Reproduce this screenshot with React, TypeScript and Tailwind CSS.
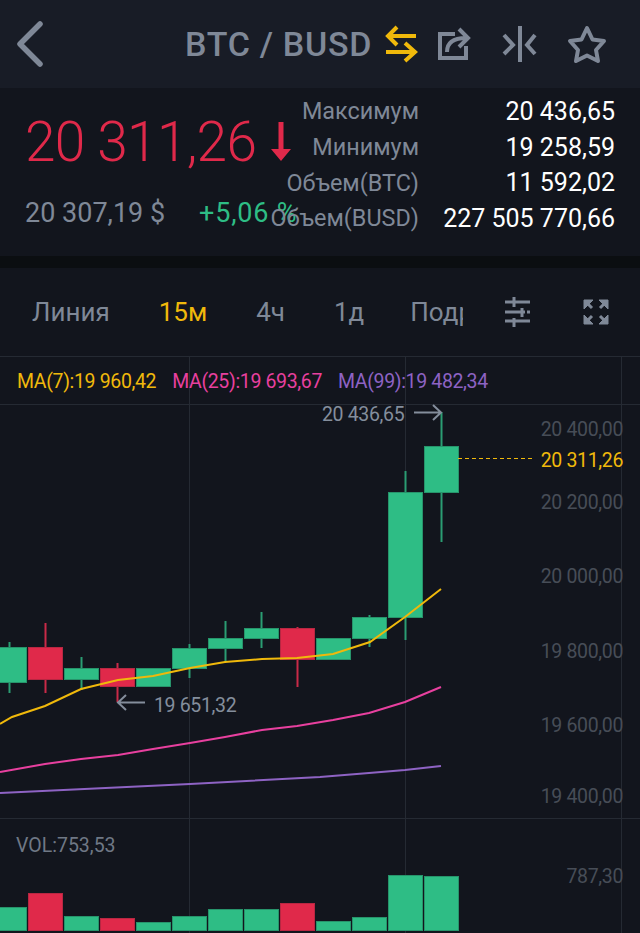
import React from 'react';

type Candle = { cx: number; top: number; bottom: number; wickTop: number; wickBottom: number; up: boolean };

const candles: Candle[] = [
  { cx: 9, top: 647, bottom: 682, wickTop: 642, wickBottom: 693, up: true },
  { cx: 45, top: 647, bottom: 679, wickTop: 623, wickBottom: 693, up: false },
  { cx: 81, top: 668, bottom: 679, wickTop: 657, wickBottom: 690, up: true },
  { cx: 117, top: 668, bottom: 686, wickTop: 663, wickBottom: 702, up: false },
  { cx: 153, top: 668, bottom: 686, wickTop: 668, wickBottom: 686, up: true },
  { cx: 189, top: 648, bottom: 668, wickTop: 644, wickBottom: 678, up: true },
  { cx: 225, top: 638, bottom: 648, wickTop: 621, wickBottom: 662, up: true },
  { cx: 261, top: 628, bottom: 638, wickTop: 612, wickBottom: 648, up: true },
  { cx: 297, top: 628, bottom: 659, wickTop: 627, wickBottom: 687, up: false },
  { cx: 333, top: 638, bottom: 659, wickTop: 638, wickBottom: 659, up: true },
  { cx: 369, top: 617, bottom: 638, wickTop: 615, wickBottom: 647, up: true },
  { cx: 405, top: 492, bottom: 617, wickTop: 471, wickBottom: 640, up: true },
  { cx: 441, top: 446, bottom: 492, wickTop: 412, wickBottom: 542, up: true },
];

const volumes = [907, 893, 916, 918, 922, 916, 909, 909, 903, 921, 917, 875, 876];

const ma7 = '0,724 12,717 45,706 81,689 118,680 153,676 190,668 225,662 262,659 297,658 333,654 370,642 405,617 441,589';
const ma25 = '0,772 45,764 81,759 118,755 153,749 190,743 225,737 262,730 297,726 333,720 369,713 405,702 441,687';
const ma99 = '0,793 190,784 320,777 369,773 405,770 441,766';

const stats = [
  { label: 'Максимум', value: '20 436,65' },
  { label: 'Минимум', value: '19 258,59' },
  { label: 'Объем(BTC)', value: '11 592,02' },
  { label: 'Объем(BUSD)', value: '227 505 770,66' },
];

const Header = () => (
  <div className="flex h-[88px] items-center bg-[#181c26] text-[#7f8897]">
    <svg viewBox="14 18 32 52" className="ml-[14px] h-[52px] w-[32px]" fill="none" stroke="currentColor" strokeWidth="5.5" strokeLinecap="round" strokeLinejoin="round">
      <path d="M40 24 L20 44 L40 64" />
    </svg>
    <div className="ml-[139px] w-[199px] whitespace-nowrap text-[34px] font-medium leading-none tracking-[0.7px]">BTC / BUSD</div>
    <svg viewBox="384 24 36 40" className="h-[40px] w-[36px]" fill="none" stroke="#f0b90b" strokeWidth="4">
      <path d="M416 36 H388 M397 27 L388 36 L397 45 M386 52 H415 M405 43 L415 52 L405 61" />
    </svg>
    <svg viewBox="436 26 36 36" className="ml-[16px] h-[36px] w-[36px]" fill="none" stroke="currentColor" strokeWidth="4">
      <path d="M455 34 H440 V58 H466 V46" />
      <path d="M447 52 C447 44 452 38 466 38 M459 29 L468 38 L459 47" />
    </svg>
    <svg viewBox="502 24 36 40" className="ml-[30px] h-[40px] w-[36px]" fill="none" stroke="currentColor" strokeWidth="4">
      <path d="M520 26 V62" />
      <path d="M504 35 L513 45 L504 54 M535 35 L527 45 L535 54" />
    </svg>
    <svg viewBox="566 24 42 40" className="ml-[28px] h-[40px] w-[42px]" fill="none" stroke="currentColor" strokeWidth="4" strokeLinejoin="round">
      <path d="M587 28 L592.5 39.5 L604 41 L596 50 L598 61 L587 55.5 L576 61 L578 50 L570 41 L581.5 39.5 Z" />
    </svg>
  </div>
);

const Stats = () => (
  <div className="flex h-[168px] bg-[#12151d]">
    <div className="w-[268px] shrink-0 pl-[25px] pt-[24px]">
      <div className="flex w-max items-center whitespace-nowrap text-[#e0294a]">
        <span className="text-[55px] font-light leading-[60px] tracking-[-0.7px]">20 311,26</span>
        <svg viewBox="0 0 22 40" className="ml-[14px] h-[40px] w-[22px] shrink-0" fill="currentColor">
          <path d="M8.5 0 H13.5 V27 H21 L11 39 L1 27 H8.5 Z" />
        </svg>
      </div>
      <div className="mt-[26px] flex w-max items-center whitespace-nowrap text-[27px] leading-[30px]">
        <span className="text-[#7f8897]">20 307,19 $</span>
        <span className="ml-[34px] tracking-[0.8px] text-[#2ebd85]">+5,06 %</span>
      </div>
    </div>
    <div className="flex grow flex-col pr-[25px] pt-[6px]">
      {stats.map((row) => (
        <div key={row.label} className="flex h-[35.7px] items-center justify-between whitespace-nowrap text-[23.4px]">
          <span className="w-[151px] text-right text-[#7f8897]">{row.label}</span>
          <span className="text-[25px] text-white">{row.value}</span>
        </div>
      ))}
    </div>
  </div>
);

const Toolbar = () => (
  <div className="flex h-[88px] items-center bg-[#12151d] text-[26px] text-[#7f8897]">
    <div className="ml-[32px] flex w-[431px] gap-[49px] overflow-hidden whitespace-nowrap">
      <span>Линия</span>
      <span className="text-[#f0b90b]">15м</span>
      <span>4ч</span>
      <span>1д</span>
      <span className="-ml-[3px]">Подробнее</span>
    </div>
    <svg viewBox="503 295 30 34" className="ml-[40px] h-[34px] w-[30px]" fill="none" stroke="currentColor" strokeWidth="3">
      <path d="M505 302 H530 M514 297 V307 M505 312 H525 M522 308 V317 M527 312 H530 M505 321 H530 M514 318 V327" />
    </svg>
    <svg viewBox="582 298 28 28" className="ml-[49px] h-[28px] w-[28px]" fill="currentColor" stroke="currentColor" strokeWidth="1">
      <path d="M584 300 H593 L584 309 Z M608 300 H599 L608 309 Z M584 324 H593 L584 315 Z M608 324 H599 L608 315 Z" />
      <path d="M586 302 L592 308 M606 302 L600 308 M586 322 L592 316 M606 322 L600 316" strokeWidth="3" />
    </svg>
  </div>
);

const axisLabels = [
  { text: '20 400,00', cls: 'top-[62px] text-[#474d57]' },
  { text: '20 311,26', cls: 'top-[93px] text-[#f0b90b]' },
  { text: '20 200,00', cls: 'top-[135px] text-[#474d57]' },
  { text: '20 000,00', cls: 'top-[209px] text-[#474d57]' },
  { text: '19 800,00', cls: 'top-[284px] text-[#474d57]' },
  { text: '19 600,00', cls: 'top-[358px] text-[#474d57]' },
  { text: '19 400,00', cls: 'top-[429px] text-[#474d57]' },
  { text: '787,30', cls: 'top-[509px] text-[#474d57]' },
];

const ChartArea = () => (
  <div className="relative h-[577px] overflow-hidden bg-[#12151d]">
    <svg viewBox="0 356 640 577" className="absolute inset-0 h-[577px] w-[640px]" fill="none">
      <path d="M0 356.5 H640 M0 404.5 H640 M0 818.5 H640 M189.5 356 V933 M405.5 356 V933 M621.5 356 V933" stroke="#252a33" strokeWidth="1" />
      {candles.map((c) => (
        <g key={c.cx}>
          <line x1={c.cx + 0.5} x2={c.cx + 0.5} y1={c.wickTop} y2={c.wickBottom} stroke={c.up ? '#2a9d73' : '#c92a48'} strokeWidth="2" />
          <rect x={c.cx - 16.5} y={c.top + 0.5} width={34} height={c.bottom - c.top} fill={c.up ? '#2ebd85' : '#e0294a'} stroke={c.up ? '#27946b' : '#b82742'} strokeWidth="1" />
        </g>
      ))}
      <polyline points={ma7} stroke="#f0b90b" strokeWidth="2" />
      <polyline points={ma25} stroke="#e8409f" strokeWidth="2" />
      <polyline points={ma99} stroke="#8e63c4" strokeWidth="2" />
      <line x1="458" x2="532" y1="458.5" y2="458.5" stroke="#f0b90b" strokeWidth="1" strokeDasharray="4 3" />
      <path d="M414 412.5 H441 M433 405 L441 412.5 L433 420" stroke="#848e9c" strokeWidth="2" />
      <path d="M145 702.5 H118 M126 695 L118 702.5 L126 710" stroke="#848e9c" strokeWidth="2" />
      {volumes.map((top, i) => (
        <rect key={i} x={candles[i].cx - 16.5} y={top + 0.5} width={34} height={930 - top} fill={candles[i].up ? '#2ebd85' : '#e0294a'} stroke={candles[i].up ? '#27946b' : '#b82742'} strokeWidth="1" />
      ))}
    </svg>
    <div className="relative flex h-[52px] items-center gap-[16px] whitespace-nowrap pl-[17px] text-[19.5px] tracking-[-0.35px]">
      <span className="text-[#f0b90b]">MA(7):19 960,42</span>
      <span className="text-[#e8409f]">MA(25):19 693,67</span>
      <span className="text-[#8e63c4]">MA(99):19 482,34</span>
    </div>
    {axisLabels.map((label) => (
      <span key={label.text} className={`absolute right-[17px] whitespace-nowrap text-[19.5px] leading-[24px] tracking-[-0.35px] ${label.cls}`}>
        {label.text}
      </span>
    ))}
    <span className="absolute left-[322px] top-[47px] whitespace-nowrap text-[19.5px] leading-[24px] tracking-[-0.35px] text-[#848e9c]">20 436,65</span>
    <span className="absolute left-[154px] top-[338px] whitespace-nowrap text-[19.5px] leading-[24px] tracking-[-0.35px] text-[#848e9c]">19 651,32</span>
    <span className="absolute left-[16px] top-[478px] whitespace-nowrap text-[19.5px] leading-[24px] text-[#6f7885]">VOL:753,53</span>
  </div>
);

export default function App() {
  return (
    <div className="h-[933px] w-[640px] overflow-hidden bg-[#12151d] font-['Roboto',sans-serif]">
      <Header />
      <Stats />
      <div className="h-[12px] bg-[#0b0e11]" />
      <Toolbar />
      <ChartArea />
    </div>
  );
}
